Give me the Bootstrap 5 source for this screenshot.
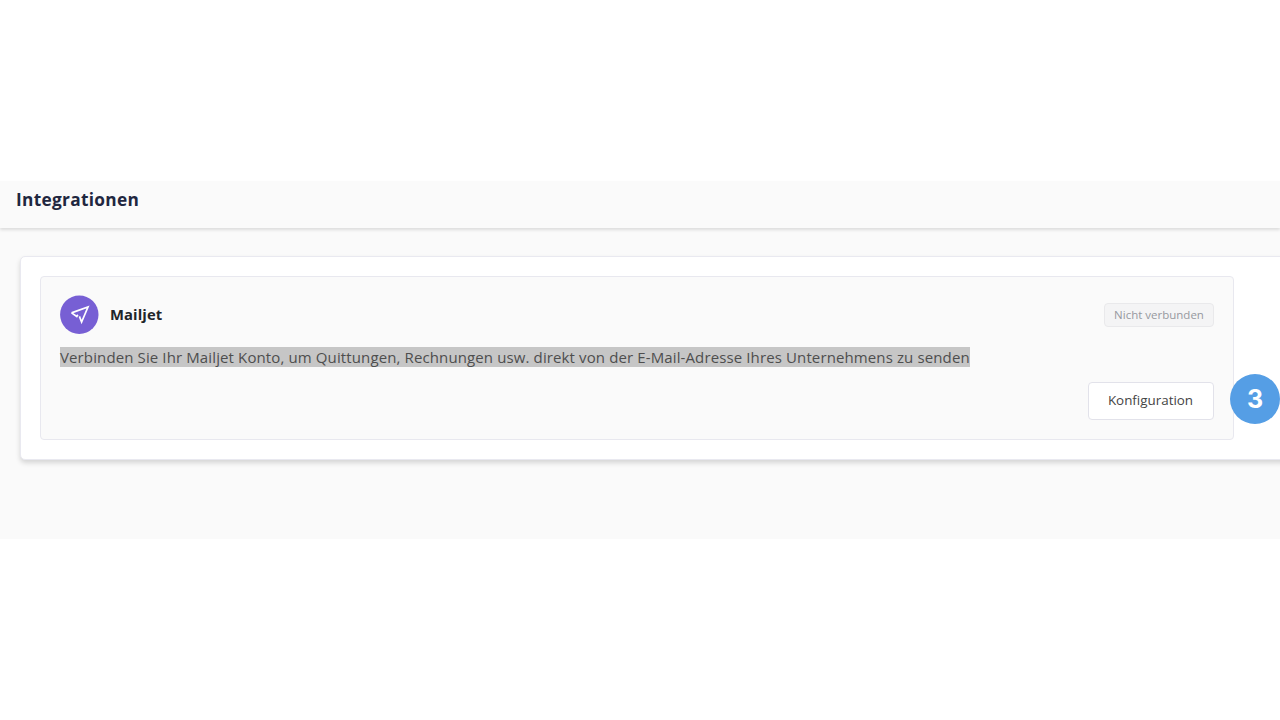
<!DOCTYPE html>
<html lang="de">
<head>
  <meta charset="UTF-8" />
  <meta name="viewport" content="width=device-width, initial-scale=1.0"/>
  <title>Integrationen</title>
  <link href="https://cdn.jsdelivr.net/npm/bootstrap@5.3.2/dist/css/bootstrap.min.css" rel="stylesheet" />
  <style>
    body {
      height: 720px;
      padding-top: 181px;
      background: #fff;
      color: #212529;
      font-family: "Open Sans", sans-serif;
      overflow: hidden;
    }

    .page {
      height: 358px;
      background: #fafafa;
    }

    .page-header {
      height: 47px;
      padding: 0 16px 10px;
      box-shadow: 0 2px 3px rgba(0, 0, 0, 0.12);
    }

    .page-title {
      color: #1f2740;
      font-size: 17.3px;
      line-height: 24px;
      font-weight: 700;
      letter-spacing: 0.3px;
    }

    .panel {
      width: 1290px;
      height: 204px;
      margin: 28px 0 0 20px;
      padding: 19px;
      border: 1px solid #e9e9f0;
      border-radius: 5px;
      box-shadow: 0 3px 5px rgba(0, 0, 0, 0.15);
    }

    .integration {
      width: 1194px;
      height: 164px;
      padding: 18px 19px 19px;
      background: #fafafa;
      border: 1px solid #e8e8ef;
      border-radius: 4px;
    }

    .logo {
      width: 39px;
      height: 39px;
    }

    .integration-name {
      margin-left: 11px;
      padding-bottom: 2px;
      font-size: 14.8px;
      line-height: 22px;
      font-weight: 700;
      letter-spacing: 0.1px;
    }

    .status {
      width: 110px;
      height: 24px;
      background: #f4f4f5;
      border: 1px solid #e9e9eb;
      border-radius: 4px;
      color: #9799a0;
      font-size: 11.5px;
    }

    .description {
      height: 20px;
      margin-top: 13px;
      font-size: 15px;
      line-height: 20px;
      letter-spacing: 0.12px;
      white-space: nowrap;
    }

    .selected {
      display: inline-block;
      background: #c6c6c6;
      color: #4e4e4e;
    }

    .btn-config {
      width: 126px;
      height: 38px;
      padding: 0 1px 1px 0;
      background: #fff;
      border: 1px solid #e2e2ea;
      border-radius: 4px;
      color: #444;
      font-size: 13.4px;
    }

    .step {
      left: 1230px;
      top: 374px;
      width: 50px;
      height: 50px;
      padding-top: 1px;
      background: #559ee5;
      font-family: Inter, sans-serif;
      font-size: 25px;
      font-weight: 700;
    }
  </style>
</head>
<body>

  <main class="page">
    <header class="page-header d-flex align-items-center">
      <h1 class="page-title mb-0">Integrationen</h1>
    </header>

    <section class="panel bg-white">
      <div class="integration d-flex flex-column">
        <div class="d-flex justify-content-between align-items-center">
          <div class="d-flex align-items-center">
            <svg class="logo" viewBox="0 0 39 39" aria-hidden="true">
              <circle cx="19.3" cy="19.7" r="19.2" fill="#775fd4"/>
              <path d="M11.5 17.9 28 12 21.6 27 19.4 21.4M11.5 17.9 16.8 21.5 17.8 19.8" fill="none" stroke="#fff" stroke-width="1.7" stroke-linejoin="miter"/>
            </svg>
            <span class="integration-name">Mailjet</span>
          </div>
          <span class="status d-flex align-items-center justify-content-center">Nicht verbunden</span>
        </div>

        <div class="description"><span class="selected">Verbinden Sie Ihr Mailjet Konto, um Quittungen, Rechnungen usw. direkt von der E-Mail-Adresse Ihres Unternehmens zu senden</span></div>

        <button type="button" class="btn btn-config mt-auto align-self-end">Konfiguration</button>
      </div>
    </section>
  </main>

  <!-- Step marker over the panel -->
  <div class="step position-absolute d-flex align-items-center justify-content-center rounded-circle text-white">3</div>

  <script src="https://cdn.jsdelivr.net/npm/bootstrap@5.3.2/dist/js/bootstrap.bundle.min.js"></script>
</body>
</html>
